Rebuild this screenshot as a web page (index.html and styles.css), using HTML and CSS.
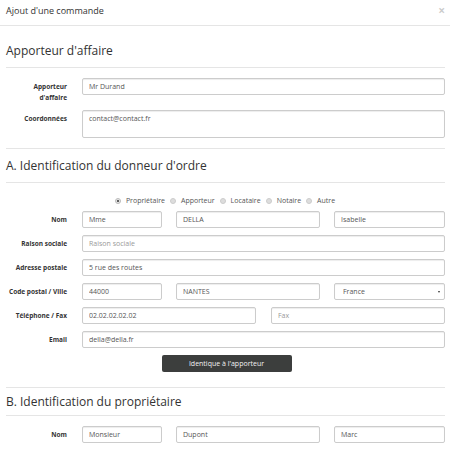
FILE: index.html
```html
<!DOCTYPE html>
<html lang="fr">
<head>
<meta charset="utf-8">
<title>Ajout d'une commande</title>
<link rel="stylesheet" href="styles.css">
</head>
<body>
<div class="modal">
  <div class="modal-header">
    <h4 class="modal-title">Ajout d'une commande</h4>
    <span class="close">&times;</span>
  </div>
  <div class="modal-body">
    <h3 class="section-title first">Apporteur d'affaire</h3>
    <div class="form">
      <div class="row">
        <label class="lbl">Apporteur<br>d'affaire</label>
        <div class="fields"><input class="ctl" value="Mr Durand"></div>
      </div>
      <div class="row">
        <label class="lbl">Coordonnées</label>
        <div class="fields"><textarea class="ctl area">contact@contact.fr</textarea></div>
      </div>
    </div>

    <h3 class="section-title">A. Identification du donneur d'ordre</h3>
    <div class="form">
      <div class="radios">
        <span class="radio checked"></span><span class="rlabel">Propriétaire</span>
        <span class="radio"></span><span class="rlabel">Apporteur</span>
        <span class="radio"></span><span class="rlabel">Locataire</span>
        <span class="radio"></span><span class="rlabel">Notaire</span>
        <span class="radio"></span><span class="rlabel">Autre</span>
      </div>
      <div class="row">
        <label class="lbl">Nom</label>
        <div class="fields three">
          <input class="ctl" value="Mme">
          <input class="ctl" value="DELLA">
          <input class="ctl" value="Isabelle">
        </div>
      </div>
      <div class="row">
        <label class="lbl">Raison sociale</label>
        <div class="fields"><input class="ctl" placeholder="Raison sociale"></div>
      </div>
      <div class="row">
        <label class="lbl">Adresse postale</label>
        <div class="fields"><input class="ctl" value="5 rue des routes"></div>
      </div>
      <div class="row">
        <label class="lbl">Code postal / Ville</label>
        <div class="fields three">
          <input class="ctl" value="44000">
          <input class="ctl" value="NANTES">
          <div class="ctl select">France</div>
        </div>
      </div>
      <div class="row">
        <label class="lbl">Téléphone / Fax</label>
        <div class="fields two">
          <input class="ctl" value="02.02.02.02.02">
          <input class="ctl" placeholder="Fax">
        </div>
      </div>
      <div class="row">
        <label class="lbl">Email</label>
        <div class="fields"><input class="ctl" value="della@della.fr"></div>
      </div>
      <div class="actions">
        <button class="btn">Identique à l'apporteur</button>
      </div>
    </div>

    <h3 class="section-title compact">B. Identification du propriétaire</h3>
    <div class="form">
      <div class="row">
        <label class="lbl">Nom</label>
        <div class="fields three">
          <input class="ctl" value="Monsieur">
          <input class="ctl" value="Dupont">
          <input class="ctl" value="Marc">
        </div>
      </div>
    </div>
  </div>
</div>
</body>
</html>
```

FILE: styles.css
```css
* { box-sizing: border-box; }
html, body { margin: 0; padding: 0; background: #fff; }
body { font-family: "Open Sans", "DejaVu Sans", sans-serif; color: #333; }

.modal { width: 450px; }

.modal-header {
  height: 26px;
  border-bottom: 1px solid #e5e5e5;
  display: flex;
  align-items: center;
  justify-content: space-between;
  padding: 0 5px 3px 6px;
}
.modal-title { margin: 0; font-size: 9px; font-weight: 400; line-height: 12px; color: #333; }
.close { font-size: 12px; font-weight: 700; line-height: 12px; color: #000; opacity: .2; }

.modal-body { padding: 0 5px 0 6px; }

.section-title {
  margin: 0;
  font-size: 12px;
  font-weight: 400;
  line-height: 14px;
  color: #333;
  padding: 9.5px 0;
  border-top: 1px solid #e5e5e5;
  border-bottom: 1px solid #e5e5e5;
}
.section-title.first { border-top: 0; padding-top: 17.5px; }
.section-title.compact { padding: 6.5px 0; }

.form { display: flex; flex-direction: column; gap: 7px; padding: 10px 0; }

.row { display: grid; grid-template-columns: 61px 1fr; column-gap: 15px; align-items: start; }
.lbl {
  text-align: right;
  font-size: 6.5px;
  font-weight: 700;
  line-height: 11px;
  padding-top: 3px;
  color: #333;
  white-space: nowrap;
}
.fields { display: grid; grid-template-columns: 1fr; }
.fields.three { grid-template-columns: 80px 144px 1fr; column-gap: 14px; }
.fields.two { grid-template-columns: 1fr 1fr; column-gap: 15px; }

.ctl {
  display: block;
  width: 100%;
  height: 17px;
  margin: 0;
  padding: 0 6px;
  font-family: inherit;
  font-size: 7px;
  line-height: 15px;
  color: #555;
  background: #fff;
  border: 1px solid #ccc;
  border-radius: 2px;
  box-shadow: inset 0 1px 1px rgba(0,0,0,.075);
  outline: none;
}
.ctl::placeholder { color: #999; }
.area { height: 28px; resize: none; padding-top: 3px; line-height: 10px; overflow: hidden; }
.select { position: relative; padding-left: 8px; }
.select::after {
  content: "";
  position: absolute;
  right: 4px;
  top: 7px;
  border-left: 1.5px solid transparent;
  border-right: 1.5px solid transparent;
  border-top: 2.5px solid #333;
}

.radios {
  display: flex;
  justify-content: center;
  align-items: center;
  height: 8px;
  margin: 4px 0 -1px;
  padding-left: 4px;
  font-size: 7px;
  color: #555;
}
.radio {
  width: 6px;
  height: 6px;
  border-radius: 50%;
  background: #ddd;
  border: 1px solid #ccc;
  margin-right: 5px;
  position: relative;
}
.radio.checked { background: #e6e6e6; border-color: #bbb; }
.radio.checked::after {
  content: "";
  position: absolute;
  left: 1px; top: 1px;
  width: 2px; height: 2px;
  border-radius: 50%;
  background: #333;
}
.rlabel { margin-right: 5px; line-height: 8px; }

.actions { display: flex; justify-content: center; padding-left: 2px; margin-bottom: 5px; }
.btn {
  width: 130px;
  height: 17px;
  padding: 0;
  border: 0;
  border-radius: 2px;
  background: #3c3e3d;
  color: #f2f2f2;
  font-family: inherit;
  font-size: 7px;
  line-height: 17px;
}
```
